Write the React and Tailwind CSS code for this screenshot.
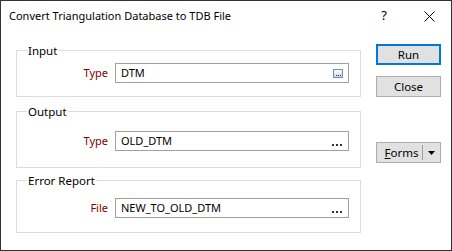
import React from "react";

const font = { fontFamily: '"Noto Sans", "Liberation Sans", sans-serif' };

const Dots = () => (
  <div className="flex gap-[2px] items-end">
    <span className="w-[2px] h-[2px] bg-[#333]" />
    <span className="w-[2px] h-[2px] bg-[#333]" />
    <span className="w-[2px] h-[2px] bg-[#333]" />
  </div>
);

const BrowseIcon = () => (
  <div className="w-[10px] h-[9px] border border-[#6f8db5] bg-gradient-to-b from-white to-[#c5d6ee] flex items-end justify-center pb-[1px]">
    <div className="flex gap-[1px]">
      <span className="w-[1px] h-[1px] bg-[#333]" />
      <span className="w-[1px] h-[1px] bg-[#333]" />
      <span className="w-[1px] h-[1px] bg-[#333]" />
    </div>
  </div>
);

const Field = ({ label, value, icon }) => (
  <div className="flex items-center">
    <span className="w-[89px] text-right pr-[7px] text-[#800000]">{label}</span>
    <div className="w-[234px] h-[20px] border border-[#a0a0a0] flex items-center pl-[5px] pr-[5px]">
      <span className="flex-1 text-[#000]">{value}</span>
      {icon ? (
        <div className="mt-[1px]">
          <BrowseIcon />
        </div>
      ) : (
        <div className="self-end mb-[4px] mr-[1px]">
          <Dots />
        </div>
      )}
    </div>
  </div>
);

const Group = ({ title, className, children }) => (
  <fieldset className={"border border-[#dcdcdc] px-[9px] " + className}>
    <legend className="ml-[1px] px-[1px] leading-[15px] text-[11.5px] text-[#000]">{title}</legend>
    {children}
  </fieldset>
);

const Button = ({ children, primary, className = "" }) => (
  <div
    className={
      "w-[65px] h-[21px] bg-[#e1e1e1] flex items-center justify-center text-[11.5px] text-[#000] " +
      (primary ? "border-2 border-[#0078d7] " : "border border-[#adadad] ") +
      className
    }
  >
    {children}
  </div>
);

export default function App() {
  return (
    <div
      className="w-[452px] h-[251px] bg-white border border-[#333] flex flex-col text-[11px] overflow-hidden"
      style={font}
    >
      {/* Title bar */}
      <div className="h-[30px] flex items-center pl-[8px] shrink-0">
        <span className="flex-1 text-[11px] text-[#000]">Convert Triangulation Database to TDB File</span>
        <span className="w-[46px] text-center text-[13px] text-[#000]">?</span>
        <div className="w-[44px] flex justify-center">
          <svg width="11" height="11" viewBox="0 0 11 11">
            <path d="M0.5 0.5 L10.5 10.5 M10.5 0.5 L0.5 10.5" stroke="#000" strokeWidth="1" />
          </svg>
        </div>
      </div>

      {/* Body */}
      <div className="flex pl-[15px] pt-[12px]">
        <div className="w-[345px] flex flex-col">
          <Group title="Input" className="pt-[5px] pb-[13px]">
            <Field label="Type" value="DTM" icon />
          </Group>
          <Group title="Output" className="mt-[7px] pt-[12px] pb-[16px]">
            <Field label="Type" value="OLD_DTM" />
          </Group>
          <Group title="Error Report" className="mt-[5px] pt-[10px] pb-[14px]">
            <Field label="File" value="NEW_TO_OLD_DTM" />
          </Group>
        </div>

        <div className="ml-[15px] flex flex-col pt-[1px]">
          <Button primary>Run</Button>
          <Button className="mt-[11px]">Close</Button>
          <div className="mt-[45px] w-[65px] h-[21px] bg-[#e1e1e1] border border-[#adadad] flex items-center text-[11.5px]">
            <span className="flex-1 text-center pl-[4px]">
              <span className="underline">F</span>orms
            </span>
            <span className="w-[1px] h-[15px] bg-[#a0a0a0]" />
            <div className="w-[17px] flex justify-center">
              <svg width="7" height="4" viewBox="0 0 7 4">
                <path d="M0 0 H7 L3.5 4 Z" fill="#000" />
              </svg>
            </div>
          </div>
        </div>
      </div>
    </div>
  );
}
